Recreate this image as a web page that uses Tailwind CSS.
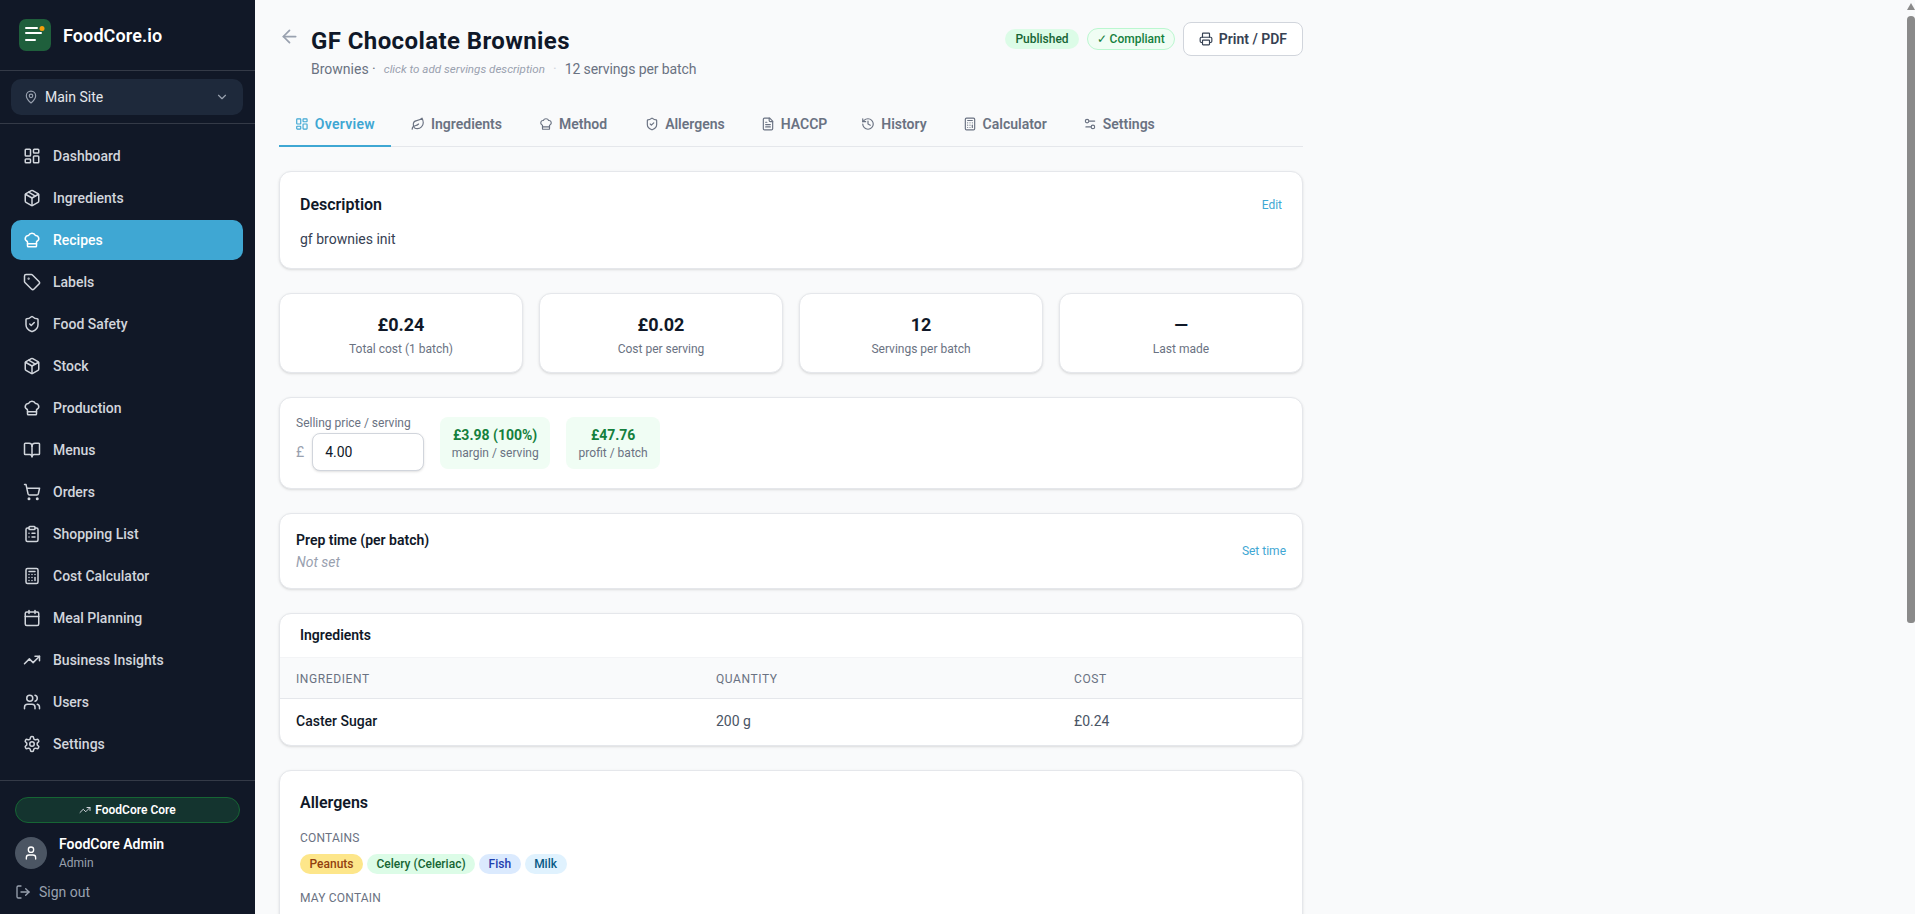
<!DOCTYPE html>
<html lang="en">
<head>
<meta charset="utf-8">
<title>FoodCore.io</title>
<script src="https://cdn.jsdelivr.net/npm/@tailwindcss/browser@4"></script>
</head>
<body class="m-0 h-[914px] overflow-hidden bg-[#f9fafb] font-['Roboto','Noto_Sans',sans-serif] text-gray-900">
<div class="flex h-[914px] w-full overflow-hidden">
  <aside class="flex h-full w-[255px] shrink-0 flex-col bg-[#111827]">
    <div class="flex h-[71px] shrink-0 items-center gap-3 border-b border-white/15 pl-[19px]">
      <svg class="size-8" viewBox="0 0 32 32"><rect width="32" height="32" rx="7" fill="#1f5f3c"/><path d="M7 10h11M7 15h15M7 22h9" transform="translate(0 -1)" stroke="#fff" stroke-width="2" stroke-linecap="round" fill="none"/><circle cx="23" cy="9.5" r="2.5" fill="#f59e0b"/></svg>
      <span class="text-[18px] font-semibold tracking-[0.1px] text-white">FoodCore.io</span>
    </div>
    <div class="shrink-0 border-b border-white/15 pl-[11px] pr-[12px] py-2">
      <div class="flex h-9 items-center rounded-[10px] bg-[#1e293b] pl-[13px] pr-[14px]">
        <svg class="size-[14px] text-gray-400" viewBox="0 0 24 24" fill="none" stroke="currentColor" stroke-width="2" stroke-linecap="round" stroke-linejoin="round"><path d="M20 10c0 4.993-5.539 10.193-7.399 11.799a1 1 0 0 1-1.202 0C9.539 20.193 4 14.993 4 10a8 8 0 0 1 16 0"/><circle cx="12" cy="10" r="3"/></svg>
        <span class="ml-[7px] flex-1 text-[14px] text-gray-200">Main Site</span>
        <svg class="size-[14px] text-gray-400" viewBox="0 0 24 24" fill="none" stroke="currentColor" stroke-width="2" stroke-linecap="round" stroke-linejoin="round"><path d="m6 9 6 6 6-6"/></svg>
      </div>
    </div>
    <nav class="flex flex-1 flex-col gap-[2px] pl-[11px] pr-[12px] pt-[12px] text-[14px] font-medium text-gray-300">
      <a class="flex h-10 items-center gap-3 rounded-[10px] px-3"><svg class="size-[18px] shrink-0" viewBox="0 0 24 24" fill="none" stroke="currentColor" stroke-width="2" stroke-linecap="round" stroke-linejoin="round"><rect width="7" height="9" x="3" y="3" rx="1"/><rect width="7" height="5" x="14" y="3" rx="1"/><rect width="7" height="9" x="14" y="12" rx="1"/><rect width="7" height="5" x="3" y="16" rx="1"/></svg>Dashboard</a>
      <a class="flex h-10 items-center gap-3 rounded-[10px] px-3"><svg class="size-[18px] shrink-0" viewBox="0 0 24 24" fill="none" stroke="currentColor" stroke-width="2" stroke-linecap="round" stroke-linejoin="round"><path d="M11 21.73a2 2 0 0 0 2 0l7-4A2 2 0 0 0 21 16V8a2 2 0 0 0-1-1.73l-7-4a2 2 0 0 0-2 0l-7 4A2 2 0 0 0 3 8v8a2 2 0 0 0 1 1.73z"/><path d="M12 22V12"/><path d="m3.3 7 8.7 5 8.7-5"/><path d="m7.5 4.27 9 5.15"/></svg>Ingredients</a>
      <a class="flex h-10 items-center gap-3 rounded-[10px] bg-[#3fa7d3] px-3 text-white"><svg class="size-[18px] shrink-0" viewBox="0 0 24 24" fill="none" stroke="currentColor" stroke-width="2" stroke-linecap="round" stroke-linejoin="round"><path d="M17 21a1 1 0 0 0 1-1v-5.35c0-.457.316-.844.727-1.041a4 4 0 0 0-2.134-7.589 5 5 0 0 0-9.186 0 4 4 0 0 0-2.134 7.588c.411.198.727.585.727 1.041V20a1 1 0 0 0 1 1Z"/><path d="M6 17h12"/></svg>Recipes</a>
      <a class="flex h-10 items-center gap-3 rounded-[10px] px-3"><svg class="size-[18px] shrink-0" viewBox="0 0 24 24" fill="none" stroke="currentColor" stroke-width="2" stroke-linecap="round" stroke-linejoin="round"><path d="M12.586 2.586A2 2 0 0 0 11.172 2H4a2 2 0 0 0-2 2v7.172a2 2 0 0 0 .586 1.414l8.704 8.704a2.426 2.426 0 0 0 3.42 0l6.58-6.58a2.426 2.426 0 0 0 0-3.42z"/><circle cx="7.5" cy="7.5" r=".5" fill="currentColor"/></svg>Labels</a>
      <a class="flex h-10 items-center gap-3 rounded-[10px] px-3"><svg class="size-[18px] shrink-0" viewBox="0 0 24 24" fill="none" stroke="currentColor" stroke-width="2" stroke-linecap="round" stroke-linejoin="round"><path d="M20 13c0 5-3.5 7.5-7.66 8.95a1 1 0 0 1-.67-.01C7.5 20.5 4 18 4 13V6a1 1 0 0 1 1-1c2 0 4.5-1.2 6.24-2.72a1.17 1.17 0 0 1 1.52 0C14.51 3.81 17 5 19 5a1 1 0 0 1 1 1z"/><path d="m9 12 2 2 4-4"/></svg>Food Safety</a>
      <a class="flex h-10 items-center gap-3 rounded-[10px] px-3"><svg class="size-[18px] shrink-0" viewBox="0 0 24 24" fill="none" stroke="currentColor" stroke-width="2" stroke-linecap="round" stroke-linejoin="round"><path d="M11 21.73a2 2 0 0 0 2 0l7-4A2 2 0 0 0 21 16V8a2 2 0 0 0-1-1.73l-7-4a2 2 0 0 0-2 0l-7 4A2 2 0 0 0 3 8v8a2 2 0 0 0 1 1.73z"/><path d="M12 22V12"/><path d="m3.3 7 8.7 5 8.7-5"/><path d="m7.5 4.27 9 5.15"/></svg>Stock</a>
      <a class="flex h-10 items-center gap-3 rounded-[10px] px-3"><svg class="size-[18px] shrink-0" viewBox="0 0 24 24" fill="none" stroke="currentColor" stroke-width="2" stroke-linecap="round" stroke-linejoin="round"><path d="M17 21a1 1 0 0 0 1-1v-5.35c0-.457.316-.844.727-1.041a4 4 0 0 0-2.134-7.589 5 5 0 0 0-9.186 0 4 4 0 0 0-2.134 7.588c.411.198.727.585.727 1.041V20a1 1 0 0 0 1 1Z"/><path d="M6 17h12"/></svg>Production</a>
      <a class="flex h-10 items-center gap-3 rounded-[10px] px-3"><svg class="size-[18px] shrink-0" viewBox="0 0 24 24" fill="none" stroke="currentColor" stroke-width="2" stroke-linecap="round" stroke-linejoin="round"><path d="M12 7v14"/><path d="M3 18a1 1 0 0 1-1-1V4a1 1 0 0 1 1-1h5a4 4 0 0 1 4 4 4 4 0 0 1 4-4h5a1 1 0 0 1 1 1v13a1 1 0 0 1-1 1h-6a3 3 0 0 0-3 3 3 3 0 0 0-3-3z"/></svg>Menus</a>
      <a class="flex h-10 items-center gap-3 rounded-[10px] px-3"><svg class="size-[18px] shrink-0" viewBox="0 0 24 24" fill="none" stroke="currentColor" stroke-width="2" stroke-linecap="round" stroke-linejoin="round"><circle cx="8" cy="21" r="1"/><circle cx="19" cy="21" r="1"/><path d="M2.05 2.05h2l2.66 12.42a2 2 0 0 0 2 1.58h9.78a2 2 0 0 0 1.95-1.57l1.65-7.43H5.12"/></svg>Orders</a>
      <a class="flex h-10 items-center gap-3 rounded-[10px] px-3"><svg class="size-[18px] shrink-0" viewBox="0 0 24 24" fill="none" stroke="currentColor" stroke-width="2" stroke-linecap="round" stroke-linejoin="round"><rect width="8" height="4" x="8" y="2" rx="1" ry="1"/><path d="M16 4h2a2 2 0 0 1 2 2v14a2 2 0 0 1-2 2H6a2 2 0 0 1-2-2V6a2 2 0 0 1 2-2h2"/><path d="M12 11h4"/><path d="M12 16h4"/><path d="M8 11h.01"/><path d="M8 16h.01"/></svg>Shopping List</a>
      <a class="flex h-10 items-center gap-3 rounded-[10px] px-3"><svg class="size-[18px] shrink-0" viewBox="0 0 24 24" fill="none" stroke="currentColor" stroke-width="2" stroke-linecap="round" stroke-linejoin="round"><rect width="16" height="20" x="4" y="2" rx="2"/><line x1="8" x2="16" y1="6" y2="6"/><line x1="16" x2="16" y1="14" y2="18"/><path d="M16 10h.01"/><path d="M12 10h.01"/><path d="M8 10h.01"/><path d="M12 14h.01"/><path d="M8 14h.01"/><path d="M12 18h.01"/><path d="M8 18h.01"/></svg>Cost Calculator</a>
      <a class="flex h-10 items-center gap-3 rounded-[10px] px-3"><svg class="size-[18px] shrink-0" viewBox="0 0 24 24" fill="none" stroke="currentColor" stroke-width="2" stroke-linecap="round" stroke-linejoin="round"><path d="M8 2v4"/><path d="M16 2v4"/><rect width="18" height="18" x="3" y="4" rx="2"/><path d="M3 10h18"/></svg>Meal Planning</a>
      <a class="flex h-10 items-center gap-3 rounded-[10px] px-3"><svg class="size-[18px] shrink-0" viewBox="0 0 24 24" fill="none" stroke="currentColor" stroke-width="2" stroke-linecap="round" stroke-linejoin="round"><path d="M16 7h6v6"/><path d="m22 7-8.5 8.5-5-5L2 17"/></svg>Business Insights</a>
      <a class="flex h-10 items-center gap-3 rounded-[10px] px-3"><svg class="size-[18px] shrink-0" viewBox="0 0 24 24" fill="none" stroke="currentColor" stroke-width="2" stroke-linecap="round" stroke-linejoin="round"><path d="M16 21v-2a4 4 0 0 0-4-4H6a4 4 0 0 0-4 4v2"/><circle cx="9" cy="7" r="4"/><path d="M22 21v-2a4 4 0 0 0-3-3.87"/><path d="M16 3.13a4 4 0 0 1 0 7.75"/></svg>Users</a>
      <a class="flex h-10 items-center gap-3 rounded-[10px] px-3"><svg class="size-[18px] shrink-0" viewBox="0 0 24 24" fill="none" stroke="currentColor" stroke-width="2" stroke-linecap="round" stroke-linejoin="round"><path d="M12.22 2h-.44a2 2 0 0 0-2 2v.18a2 2 0 0 1-1 1.73l-.43.25a2 2 0 0 1-2 0l-.15-.08a2 2 0 0 0-2.73.73l-.22.38a2 2 0 0 0 .73 2.73l.15.1a2 2 0 0 1 1 1.72v.51a2 2 0 0 1-1 1.74l-.15.09a2 2 0 0 0-.73 2.73l.22.38a2 2 0 0 0 2.73.73l.15-.08a2 2 0 0 1 2 0l.43.25a2 2 0 0 1 1 1.73V20a2 2 0 0 0 2 2h.44a2 2 0 0 0 2-2v-.18a2 2 0 0 1 1-1.73l.43-.25a2 2 0 0 1 2 0l.15.08a2 2 0 0 0 2.73-.73l.22-.39a2 2 0 0 0-.73-2.73l-.15-.08a2 2 0 0 1-1-1.74v-.5a2 2 0 0 1 1-1.74l.15-.09a2 2 0 0 0 .73-2.73l-.22-.38a2 2 0 0 0-2.73-.73l-.15.08a2 2 0 0 1-2 0l-.43-.25a2 2 0 0 1-1-1.73V4a2 2 0 0 0-2-2z"/><circle cx="12" cy="12" r="3"/></svg>Settings</a>
    </nav>
    <div class="h-[134px] shrink-0 border-t border-white/15 px-[15px] pt-[16px]">
      <div class="flex h-[26px] items-center justify-center gap-1 rounded-full border border-[#166534] bg-[#14342f] text-[12px] font-semibold text-white"><svg class="size-3 text-gray-300" viewBox="0 0 24 24" fill="none" stroke="currentColor" stroke-width="2" stroke-linecap="round" stroke-linejoin="round"><path d="M16 7h6v6"/><path d="m22 7-8.5 8.5-5-5L2 17"/></svg>FoodCore Core</div>
      <div class="mt-[11px] flex items-center gap-3">
        <div class="flex size-8 items-center justify-center rounded-full bg-[#4b5563] text-white"><svg class="size-4" viewBox="0 0 24 24" fill="none" stroke="currentColor" stroke-width="2" stroke-linecap="round" stroke-linejoin="round"><path d="M19 21v-2a4 4 0 0 0-4-4H9a4 4 0 0 0-4 4v2"/><circle cx="12" cy="7" r="4"/></svg></div>
        <div><div class="text-[14px] leading-5 font-semibold text-white">FoodCore Admin</div><div class="text-[12px] leading-[18px] text-gray-400">Admin</div></div>
      </div>
      <div class="mt-[10px] flex items-center gap-2 text-[14px] leading-5 text-gray-400"><svg class="size-4" viewBox="0 0 24 24" fill="none" stroke="currentColor" stroke-width="2" stroke-linecap="round" stroke-linejoin="round"><path d="M9 21H5a2 2 0 0 1-2-2V5a2 2 0 0 1 2-2h4"/><path d="m16 17 5-5-5-5"/><path d="M21 12H9"/></svg>Sign out</div>
    </div>
  </aside>

  <main class="relative h-full flex-1 overflow-hidden">
    <div class="w-[1072px] px-6">
      <header class="flex h-[100px] items-start justify-between pt-[22px]">
        <div class="flex items-start gap-[11px]">
          <svg class="mt-[4px] size-[21px] text-gray-400" viewBox="0 0 24 24" fill="none" stroke="currentColor" stroke-width="2" stroke-linecap="round" stroke-linejoin="round"><path d="m12 19-7-7 7-7"/><path d="M19 12H5"/></svg>
          <div>
            <h1 class="pt-px text-[24px] leading-[36px] font-bold tracking-[0.4px] text-gray-900">GF Chocolate Brownies</h1>
            <div class="flex items-center text-[14px] leading-5 text-gray-500"><span>Brownies ·</span><span class="ml-2 text-[11.6px] italic text-gray-400">click to add servings description</span><span class="mx-2 text-gray-300">·</span><span class="tracking-[-0.1px]">12 servings per batch</span></div>
          </div>
        </div>
        <div class="flex items-center gap-2">
          <span class="flex h-5 items-center rounded-full bg-[#dcfce7] px-[10px] text-[12px] font-medium text-[#166534]">Published</span>
          <span class="flex h-[22px] items-center rounded-full border border-[#bbf7d0] bg-[#f0fdf4] px-[9px] text-[12px] font-medium text-[#15803d]">✓ Compliant</span>
          <button class="flex h-[34px] items-center gap-[6px] rounded-lg border border-gray-300 bg-white px-[15px] text-[14px] font-semibold text-gray-700"><svg class="size-[14px]" viewBox="0 0 24 24" fill="none" stroke="currentColor" stroke-width="2" stroke-linecap="round" stroke-linejoin="round"><path d="M6 18H4a2 2 0 0 1-2-2v-5a2 2 0 0 1 2-2h16a2 2 0 0 1 2 2v5a2 2 0 0 1-2 2h-2"/><path d="M6 9V3a1 1 0 0 1 1-1h10a1 1 0 0 1 1 1v6"/><rect width="12" height="8" x="6" y="14" rx="1"/></svg>Print / PDF</button>
        </div>
      </header>
      <div class="flex h-[47px] items-stretch gap-1 border-b border-gray-200 text-[14px] font-semibold text-gray-500">
        <a class="-mb-px flex w-[112px] items-center gap-[6px] border-b-2 border-[#3fa7d3] px-4 pt-[3px] tracking-[0.3px] text-[#3fa7d3]"><svg class="size-[14px]" viewBox="0 0 24 24" fill="none" stroke="currentColor" stroke-width="2" stroke-linecap="round" stroke-linejoin="round"><rect width="7" height="9" x="3" y="3" rx="1"/><rect width="7" height="5" x="14" y="3" rx="1"/><rect width="7" height="9" x="14" y="12" rx="1"/><rect width="7" height="5" x="3" y="16" rx="1"/></svg>Overview</a>
        <a class="flex items-center gap-[6px] px-4 pt-[2px]"><svg class="size-[14px]" viewBox="0 0 24 24" fill="none" stroke="currentColor" stroke-width="2" stroke-linecap="round" stroke-linejoin="round"><path d="M11 20A7 7 0 0 1 9.8 6.1C15.5 5 17 4.48 19 2c1 2 2 4.18 2 8 0 5.5-4.78 10-10 10Z"/><path d="M2 21c0-3 1.85-5.36 5.08-6C9.5 14.52 12 13 13 12"/></svg>Ingredients</a>
        <a class="ml-px flex items-center gap-[6px] px-4 pt-[2px]"><svg class="size-[14px]" viewBox="0 0 24 24" fill="none" stroke="currentColor" stroke-width="2" stroke-linecap="round" stroke-linejoin="round"><path d="M17 21a1 1 0 0 0 1-1v-5.35c0-.457.316-.844.727-1.041a4 4 0 0 0-2.134-7.589 5 5 0 0 0-9.186 0 4 4 0 0 0-2.134 7.588c.411.198.727.585.727 1.041V20a1 1 0 0 0 1 1Z"/><path d="M6 17h12"/></svg>Method</a>
        <a class="ml-[2px] flex items-center gap-[6px] px-4 pt-[2px]"><svg class="size-[14px]" viewBox="0 0 24 24" fill="none" stroke="currentColor" stroke-width="2" stroke-linecap="round" stroke-linejoin="round"><path d="M20 13c0 5-3.5 7.5-7.66 8.95a1 1 0 0 1-.67-.01C7.5 20.5 4 18 4 13V6a1 1 0 0 1 1-1c2 0 4.5-1.2 6.24-2.72a1.17 1.17 0 0 1 1.52 0C14.51 3.81 17 5 19 5a1 1 0 0 1 1 1z"/><path d="m9 12 2 2 4-4"/></svg>Allergens</a>
        <a class="flex items-center gap-[6px] px-4 pt-[2px]"><svg class="size-[14px]" viewBox="0 0 24 24" fill="none" stroke="currentColor" stroke-width="2" stroke-linecap="round" stroke-linejoin="round"><path d="M15 2H6a2 2 0 0 0-2 2v16a2 2 0 0 0 2 2h12a2 2 0 0 0 2-2V7Z"/><path d="M14 2v4a2 2 0 0 0 2 2h4"/><path d="M10 9H8"/><path d="M16 13H8"/><path d="M16 17H8"/></svg>HACCP</a>
        <a class="-ml-[2px] flex items-center gap-[6px] px-4 pt-[2px]"><svg class="size-[14px]" viewBox="0 0 24 24" fill="none" stroke="currentColor" stroke-width="2" stroke-linecap="round" stroke-linejoin="round"><path d="M3 12a9 9 0 1 0 9-9 9.75 9.75 0 0 0-6.74 2.74L3 8"/><path d="M3 3v5h5"/><path d="M12 7v5l4 2"/></svg>History</a>
        <a class="flex items-center gap-[6px] px-4 pt-[2px]"><svg class="size-[14px]" viewBox="0 0 24 24" fill="none" stroke="currentColor" stroke-width="2" stroke-linecap="round" stroke-linejoin="round"><rect width="16" height="20" x="4" y="2" rx="2"/><line x1="8" x2="16" y1="6" y2="6"/><line x1="16" x2="16" y1="14" y2="18"/><path d="M16 10h.01"/><path d="M12 10h.01"/><path d="M8 10h.01"/><path d="M12 14h.01"/><path d="M8 14h.01"/><path d="M12 18h.01"/><path d="M8 18h.01"/></svg>Calculator</a>
        <a class="flex items-center gap-[6px] px-4 pt-[2px]"><svg class="size-[14px]" viewBox="0 0 24 24" fill="none" stroke="currentColor" stroke-width="2" stroke-linecap="round" stroke-linejoin="round"><path d="M20 7h-9"/><path d="M14 17H5"/><circle cx="17" cy="17" r="3"/><circle cx="7" cy="7" r="3"/></svg>Settings</a>
      </div>
      <div class="mt-6 flex flex-col gap-6">
        <section class="h-[98px] rounded-xl border border-gray-200 bg-white px-5 pt-[21px] shadow-sm">
          <div class="flex items-center justify-between"><h2 class="text-[16px] font-semibold text-gray-900">Description</h2><span class="text-[12px] text-[#3fa7d3]">Edit</span></div>
          <p class="mt-[12px] text-[14px] text-gray-700">gf brownies init</p>
        </section>
        <section class="grid h-[80px] grid-cols-4 gap-4">
          <div class="flex flex-col items-center justify-center rounded-xl border border-gray-200 bg-white pt-[3px] shadow-sm"><div class="text-[18px] leading-7 font-bold text-gray-900">£0.24</div><div class="text-[12px] leading-5 text-gray-500">Total cost (1 batch)</div></div>
          <div class="flex flex-col items-center justify-center rounded-xl border border-gray-200 bg-white pt-[3px] shadow-sm"><div class="text-[18px] leading-7 font-bold text-gray-900">£0.02</div><div class="text-[12px] leading-5 text-gray-500">Cost per serving</div></div>
          <div class="flex flex-col items-center justify-center rounded-xl border border-gray-200 bg-white pt-[3px] shadow-sm"><div class="text-[18px] leading-7 font-bold text-gray-900">12</div><div class="text-[12px] leading-5 text-gray-500">Servings per batch</div></div>
          <div class="flex flex-col items-center justify-center rounded-xl border border-gray-200 bg-white pt-[3px] shadow-sm"><div class="text-[18px] leading-7 font-bold text-gray-900">—</div><div class="text-[12px] leading-5 text-gray-500">Last made</div></div>
        </section>
        <section class="flex h-[92px] items-start gap-4 rounded-xl border border-gray-200 bg-white pl-4 pt-[17px] shadow-sm">
          <div>
            <div class="text-[12px] leading-4 text-gray-500">Selling price / serving</div>
            <div class="mt-[2px] flex items-center gap-2"><span class="text-[14px] text-gray-400">£</span><div class="flex h-[38px] w-[112px] items-center rounded-lg border border-gray-300 bg-white pl-3 text-[14px] text-gray-900 shadow-sm">4.00</div></div>
          </div>
          <div class="mt-[2px] flex h-[52px] w-[110px] flex-col items-center justify-center rounded-lg bg-[#f0fdf4]"><div class="text-[14px] font-bold leading-5 text-[#15803d]">£3.98 (100%)</div><div class="text-[12px] leading-4 text-gray-500">margin / serving</div></div>
          <div class="mt-[2px] flex h-[52px] w-[94px] flex-col items-center justify-center rounded-lg bg-[#f0fdf4]"><div class="text-[14px] font-bold leading-5 text-[#15803d]">£47.76</div><div class="text-[12px] leading-4 text-gray-500">profit / batch</div></div>
        </section>
        <section class="flex h-[76px] items-center justify-between rounded-xl border border-gray-200 bg-white px-4 shadow-sm">
          <div><div class="text-[14px] font-semibold leading-5 text-gray-900">Prep time (per batch)</div><div class="mt-[2px] text-[14px] italic leading-5 text-gray-400">Not set</div></div>
          <span class="text-[12px] text-[#3fa7d3]">Set time</span>
        </section>
        <section class="h-[133px] overflow-hidden rounded-xl border border-gray-200 bg-white shadow-sm">
          <div class="flex h-[44px] items-center border-b border-gray-100 px-5 text-[14px] font-semibold text-gray-900">Ingredients</div>
          <div class="grid h-[41px] grid-cols-[420px_358px_1fr] items-center border-b border-gray-200 bg-[#f9fafb] pl-4 pt-px text-[12px] font-normal uppercase tracking-[0.6px] text-gray-500"><span>Ingredient</span><span>Quantity</span><span>Cost</span></div>
          <div class="grid h-[45px] grid-cols-[420px_358px_1fr] items-center pl-4 text-[14px] text-gray-600"><span class="font-medium text-gray-900">Caster Sugar</span><span>200 g</span><span>£0.24</span></div>
        </section>
        <section class="h-[300px] rounded-xl border border-gray-200 bg-white px-5 pt-[20px] shadow-sm">
          <h2 class="text-[16px] font-semibold leading-6 text-gray-900">Allergens</h2>
          <div class="mt-[15px] text-[12px] font-normal uppercase leading-4 tracking-[0.2px] text-gray-500">Contains</div>
          <div class="mt-[8px] flex gap-1 text-[12px] font-medium"><span class="flex h-5 items-center rounded-full bg-[#fde68a] px-[9.5px] text-[#92400e]">Peanuts</span><span class="flex h-5 items-center rounded-full bg-[#dcfce7] px-[9.5px] text-[#166534]">Celery (Celeriac)</span><span class="flex h-5 items-center rounded-full bg-[#dbeafe] px-[9.5px] text-[#1e40af]">Fish</span><span class="flex h-5 items-center rounded-full bg-[#e0f2fe] px-[9.5px] text-[#075985]">Milk</span></div>
          <div class="mt-[16px] text-[12px] font-normal uppercase leading-4 tracking-[0.2px] text-gray-500">May contain</div>
        </section>
      </div>
    </div>
    <div class="absolute right-0 top-0 h-full w-2"><svg class="absolute left-0 top-[3px] h-[7px] w-2" viewBox="0 0 8 7"><path d="M4 0 8 7H0z" fill="#8a8a8a"/></svg><div class="absolute left-0 top-[16px] h-[607px] w-2 rounded-t-[4px] rounded-b-[3px] bg-[#8a8a8a]"></div></div>
  </main>
</div>
</body>
</html>
